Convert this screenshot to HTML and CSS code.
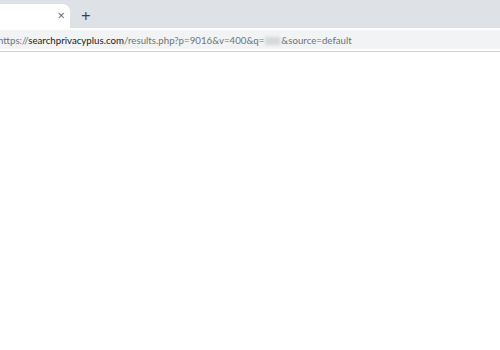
FILE: index.html
```html
<!DOCTYPE html>
<html>
<head>
<meta charset="utf-8">
<link rel="stylesheet" href="styles.css">
</head>
<body>
<div class="tabstrip">
  <div class="tab">
    <span class="close">×</span>
  </div>
  <span class="newtab">+</span>
</div>
<div class="toolbar">
  <div class="omnibox">
    <span class="url"><span class="dim">https://</span><span class="host">searchprivacyplus.com</span><span class="dim">/results.php?p=9016&amp;v=400&amp;q=<span class="blur"></span>&amp;source=default</span></span>
  </div>
</div>
<div class="content"></div>
</body>
</html>
```
FILE: styles.css
```css
html, body {
  margin: 0;
  padding: 0;
  background: #ffffff;
  font-family: "Open Sans", "Noto Sans", sans-serif;
}
.tabstrip {
  height: 28px;
  background: #dee1e6;
  display: flex;
  align-items: flex-end;
}
.tab {
  width: 70px;
  height: 24px;
  background: #ffffff;
  border-top-right-radius: 7px;
  display: flex;
  justify-content: flex-end;
  align-items: center;
  box-sizing: border-box;
  padding-right: 5px;
}
.close {
  font-size: 13px;
  color: #5f6368;
  line-height: 1;
  margin-top: -1px;
}
.newtab {
  font-size: 17px;
  color: #3c4043;
  line-height: 1;
  margin-left: 11px;
  align-self: center;
  margin-top: 3px;
}
.toolbar {
  background: #ffffff;
  padding-top: 2px;
  border-bottom: 1px solid #d0d0d0;
  box-sizing: border-box;
  height: 24px;
}
.omnibox {
  height: 19px;
  background: #f1f3f4;
  display: flex;
  align-items: center;
  overflow: hidden;
}
.url {
  font-family: "Lato", "Open Sans", sans-serif;
  font-size: 9.7px;
  white-space: nowrap;
  margin-left: -2px;
  margin-top: 1px;
}
.dim {
  color: #6f7377;
}
.host {
  color: #202124;
}
.blur {
  width: 15px;
  height: 8px;
  margin: 0 1px;
  background: #d6d8da;
  filter: blur(1.5px);
  display: inline-block;
  vertical-align: -1px;
}
```
